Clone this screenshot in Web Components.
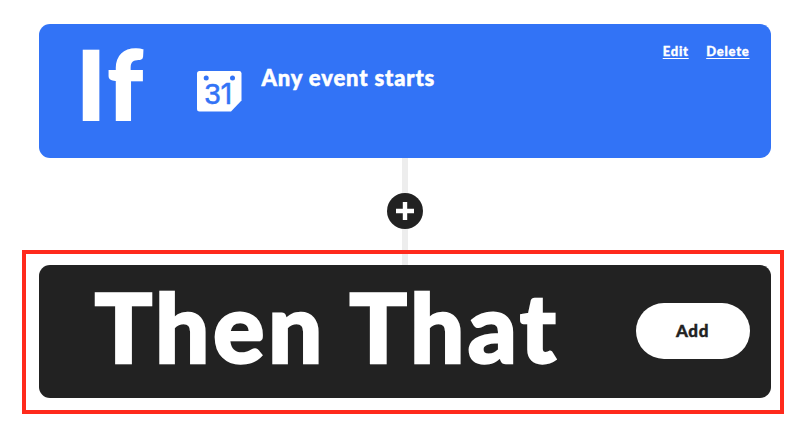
<!DOCTYPE html>
<html lang="en">
<head>
<meta charset="utf-8">
<title>Applet builder</title>
<style>
body { margin: 0; background: #fff; font-family: Lato, "Open Sans", sans-serif; }
</style>
</head>
<body>
<applet-builder></applet-builder>
<script>
const define = (name, html) => customElements.define(name, class extends HTMLElement {
  constructor() {
    super();
    const t = document.createElement('template');
    t.innerHTML = html;
    this.attachShadow({ mode: 'open' }).append(t.content.cloneNode(true));
  }
});

define('calendar-icon', `
<style>:host{display:block;width:45px;height:41px} svg{display:block}
text{font:29px "Liberation Sans",sans-serif;fill:#3273f6;stroke:#3273f6;stroke-width:.5}
.one{font-family:Inter,sans-serif}</style>
<svg width="45" height="41" viewBox="0 0 45 41">
<path fill="#fff" d="M2.5 0H42.5Q44.5 0 44.5 2.5V29.5L34 40.5H2.5Q0 40.5 0 38V2.5Q0 0 2.5 0Z"/>
<circle cx="9.2" cy="7" r="2.5" fill="#3273f6"/><circle cx="35.5" cy="7" r="2.5" fill="#3273f6"/>
<text x="7.4" y="33">3<tspan class="one" x="23.6">1</tspan></text>
</svg>`);

define('card-link', `
<style>:host{display:block} a{color:#fff;font:900 13px/16px Lato,sans-serif;letter-spacing:.75px;-webkit-text-stroke:.35px #fff;text-decoration:underline;text-decoration-thickness:1px;text-underline-offset:2px;cursor:pointer}</style>
<a><slot></slot></a>`);

define('pill-button', `
<style>:host{display:block}
button{display:block;width:114px;height:56px;padding:0;border:0;border-radius:28px;background:#fff;color:#222;font:900 17px/54px Lato,sans-serif;letter-spacing:.6px;-webkit-text-stroke:.4px #222}</style>
<button><slot></slot></button>`);

define('trigger-card', `
<style>:host{display:flex;box-sizing:border-box;height:133.5px;border-radius:11px;background:#3273f6;color:#fff;padding:0 21px 0 38px}
.word{font:900 96px/116px Lato,sans-serif;width:120px;flex:none;white-space:nowrap;padding-top:1px;-webkit-text-stroke:2px #fff;letter-spacing:3.8px}
calendar-icon{margin-top:46.5px;flex:none}
.title{flex:1;margin:39.5px 0 0 20px;font:900 22px/28px Lato,sans-serif;letter-spacing:.85px;-webkit-text-stroke:.5px #fff}
nav{display:flex;gap:17.5px;margin-top:16px;align-self:flex-start}</style>
<div class="word">If</div><calendar-icon></calendar-icon>
<div class="title"><slot></slot></div>
<nav><card-link>Edit</card-link><card-link>Delete</card-link></nav>`);

define('step-connector', `
<style>:host{display:flex;align-items:center;justify-content:center;height:107px;background:linear-gradient(#ededed,#ededed) 50% 0/6px 100% no-repeat}
svg{display:block}</style>
<svg width="36" height="36" viewBox="0 0 36 36"><circle cx="18" cy="18" r="18" fill="#222"/><path d="M9 18H27M18 9V27" stroke="#fff" stroke-width="4.4"/></svg>`);

define('action-card', `
<style>:host{display:flex;align-items:center;justify-content:space-between;position:relative;box-sizing:border-box;height:133.5px;border-radius:11px;background:#222;color:#fff;padding:0 21px 0 56px}
:host::after{content:"";position:absolute;inset:-14.5px -13.3px -16px -16.7px;border:4.5px solid #ff2a1c;pointer-events:none}
.word{font:900 96px/116px Lato,sans-serif;white-space:nowrap;letter-spacing:3.5px;padding-bottom:10px;-webkit-text-stroke:2.3px #fff}</style>
<div class="word"><slot></slot></div><pill-button>Add</pill-button>`);

define('applet-builder', `
<style>:host{display:flex;flex-direction:column;box-sizing:border-box;width:808px;height:438px;padding:24px 37.5px 0 38.5px;overflow:hidden}</style>
<trigger-card>Any event starts</trigger-card>
<step-connector></step-connector>
<action-card>Then That</action-card>`);
</script>
</body>
</html>
